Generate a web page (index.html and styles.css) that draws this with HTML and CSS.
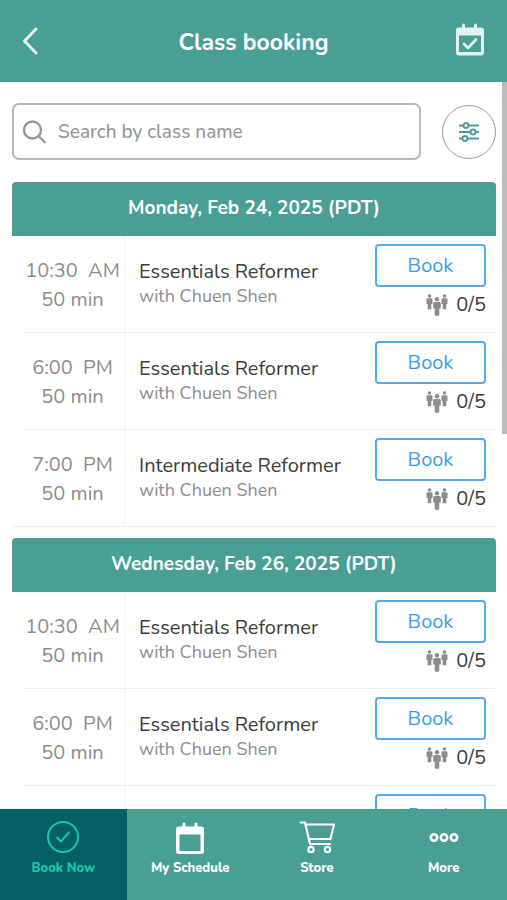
FILE: index.html
```html
<!DOCTYPE html>
<html lang="en">
<head>
<meta charset="utf-8">
<meta name="viewport" content="width=device-width, initial-scale=1">
<title>Class booking</title>
<link rel="stylesheet" href="styles.css">
</head>
<body>
<svg class="sprite" aria-hidden="true">
  <symbol id="people" viewBox="0 0 22 22">
    <g id="person">
      <circle cx="3.500" cy="2" r="1.800"/>
      <path d="M1.700 4.200h3.600q1.200 0 1.200 1.200v4.600H5.300v5.200H1.700V10H.5V5.400q0-1.200 1.200-1.200z"/>
    </g>
    <use href="#person" x="15"/>
    <circle cx="11" cy="5.200" r="2.200"/>
    <path d="M8.800 8h4.400q1.600 0 1.600 1.600v5h-1.500v6q0 1.200-1.100 1.200H9.800q-1.100 0-1.100-1.200v-6H7.200v-5Q7.200 8 8.800 8z"/>
  </symbol>
</svg>

<header class="topbar">
  <button class="icon-button" type="button" aria-label="Back">
    <svg width="18" height="28" viewBox="0 0 18 28"><path d="M16 2 4.500 14 16 26" fill="none" stroke="currentColor" stroke-width="3" stroke-linecap="round" stroke-linejoin="round"/></svg>
  </button>
  <h1>Class booking</h1>
  <button class="icon-button" type="button" aria-label="My bookings">
    <svg width="30" height="36" viewBox="0 0 30 36"><path fill="currentColor" fill-rule="evenodd" d="M7 2q0-1.500 1.500-1.500T10 2v2.500h9V2q0-1.500 1.500-1.500T22 2v2.500h4q3 0 3 3V29.500q0 3-3 3H4q-3 0-3-3V7.500q0-3 3-3h3zM4 12.500V29h22V12.500z"/><path d="m9 21 4 4 8-8.500" fill="none" stroke="currentColor" stroke-width="2.600" stroke-linecap="round" stroke-linejoin="round"/></svg>
  </button>
</header>

<main class="content">
  <form class="search">
    <label class="search-box">
      <svg width="24" height="24" viewBox="0 0 24 24" fill="none" stroke="currentColor" stroke-width="2.400"><circle cx="9.500" cy="10" r="8.500"/><path d="m16 16.500 6.500 6.500"/></svg>
      <input type="search" placeholder="Search by class name" aria-label="Search by class name">
    </label>
    <button class="filter" type="button" aria-label="Filter">
      <svg width="22" height="20" viewBox="0 0 22 20" fill="none" stroke="currentColor" stroke-width="1.900"><path d="M1 3.500h4.500m5 0H21M1 10h11.500m5 0H21M1 16.500h3.500m5 0H21"/><circle cx="8" cy="3.500" r="2.500"/><circle cx="15" cy="10" r="2.500"/><circle cx="7" cy="16.500" r="2.500"/></svg>
    </button>
  </form>

  <section class="day">
    <h2>Monday, Feb 24, 2025 (PDT)</h2>
    <ul>
      <li class="session">
        <div class="when"><span>10:30&nbsp; AM</span><span>50 min</span></div>
        <div class="what"><h3>Essentials Reformer</h3><p>with Chuen Shen</p></div>
        <div class="action"><button class="book" type="button">Book</button><p class="spots"><svg width="22" height="22"><use href="#people"/></svg>0/5</p></div>
      </li>
      <li class="session">
        <div class="when"><span>6:00&nbsp; PM</span><span>50 min</span></div>
        <div class="what"><h3>Essentials Reformer</h3><p>with Chuen Shen</p></div>
        <div class="action"><button class="book" type="button">Book</button><p class="spots"><svg width="22" height="22"><use href="#people"/></svg>0/5</p></div>
      </li>
      <li class="session">
        <div class="when"><span>7:00&nbsp; PM</span><span>50 min</span></div>
        <div class="what"><h3>Intermediate Reformer</h3><p>with Chuen Shen</p></div>
        <div class="action"><button class="book" type="button">Book</button><p class="spots"><svg width="22" height="22"><use href="#people"/></svg>0/5</p></div>
      </li>
    </ul>
  </section>

  <section class="day">
    <h2>Wednesday, Feb 26, 2025 (PDT)</h2>
    <ul>
      <li class="session">
        <div class="when"><span>10:30&nbsp; AM</span><span>50 min</span></div>
        <div class="what"><h3>Essentials Reformer</h3><p>with Chuen Shen</p></div>
        <div class="action"><button class="book" type="button">Book</button><p class="spots"><svg width="22" height="22"><use href="#people"/></svg>0/5</p></div>
      </li>
      <li class="session">
        <div class="when"><span>6:00&nbsp; PM</span><span>50 min</span></div>
        <div class="what"><h3>Essentials Reformer</h3><p>with Chuen Shen</p></div>
        <div class="action"><button class="book" type="button">Book</button><p class="spots"><svg width="22" height="22"><use href="#people"/></svg>0/5</p></div>
      </li>
      <li class="session">
        <div class="when"></div>
        <div class="what"></div>
        <div class="action"><button class="book" type="button">Book</button></div>
      </li>
    </ul>
  </section>
  <div class="scroll-thumb"></div>
</main>

<nav class="tabs">
  <a class="tab active" href="#book" aria-current="page">
    <svg width="34" height="34" viewBox="0 0 34 34" fill="none" stroke="currentColor" stroke-width="2" stroke-linecap="round" stroke-linejoin="round"><circle cx="17" cy="17" r="15"/><path d="m11 17.500 4 4 8-9"/></svg>
    Book Now
  </a>
  <a class="tab" href="#schedule">
    <svg width="30" height="34" viewBox="0 0 30 34"><path fill="currentColor" fill-rule="evenodd" d="M7.500 4q0-1.500 1.500-1.500T10.500 4v2.500h9V4q0-1.500 1.500-1.500T22.500 4v2.500H26q3 0 3 3V31q0 3-3 3H4q-3 0-3-3V9.500q0-3 3-3h3.500zM4.500 14.500V31h21V14.500z"/></svg>
    My Schedule
  </a>
  <a class="tab" href="#store">
    <svg width="36" height="34" viewBox="0 0 36 34" fill="none" stroke="currentColor" stroke-width="2.200" stroke-linecap="round" stroke-linejoin="round"><path d="M1.500 2.500H6l5 21.500H31M7 4.500h28L31.500 19H10"/><circle cx="12" cy="29.500" r="2.700"/><circle cx="28.500" cy="29.500" r="2.700"/></svg>
    Store
  </a>
  <a class="tab" href="#more">
    <svg width="30" height="34" viewBox="0 0 30 34" fill="none" stroke="currentColor" stroke-width="2.600"><circle cx="5" cy="17.500" r="3.200"/><circle cx="15" cy="17.500" r="3.200"/><circle cx="25" cy="17.500" r="3.200"/></svg>
    More
  </a>
</nav>
</body>
</html>
```
FILE: styles.css
```css
* { box-sizing: border-box; }

body {
  margin: 0;
  height: 100vh;
  display: flex;
  flex-direction: column;
  background: #fff;
  color: #3c3c3c;
  font-family: Nunito, Lato, sans-serif;
  font-size: 20px;
}

h1, h2, h3, p, ul { margin: 0; padding: 0; }
ul { list-style: none; }
button, input { font: inherit; }
button { cursor: pointer; }
svg { flex: none; }

.sprite {
  position: absolute;
  width: 0;
  height: 0;
}

.topbar {
  flex: none;
  display: flex;
  align-items: center;
  justify-content: space-between;
  height: 82px;
  padding: 0 20px;
  background: #4a9f95;
  color: #fff;
}

.topbar h1 {
  padding-top: 3px;
  font-size: 23px;
  line-height: 28px;
  font-weight: 700;
}

.icon-button {
  display: flex;
  width: 32px;
  padding: 0;
  border: 0;
  background: none;
  color: #e0f3f1;
}

.content {
  position: relative;
  flex: 1;
  min-height: 0;
  overflow: hidden;
  padding: 21px 11px 0 12px;
}

.search {
  display: flex;
  align-items: center;
  gap: 21px;
  margin-bottom: 22px;
}

.search-box {
  flex: 1;
  display: flex;
  align-items: center;
  gap: 11px;
  height: 57px;
  padding: 0 9px;
  border: 2px solid #b3b8b8;
  border-radius: 7px;
  color: #929999;
}

.search-box input {
  flex: 1;
  min-width: 0;
  padding: 0;
  border: 0;
  outline: 0;
  background: none;
  color: #3c3c3c;
  font-size: 19px;
  font-weight: 500;
}

.search-box input::placeholder { color: #929999; }

.filter {
  display: flex;
  align-items: center;
  justify-content: center;
  width: 54px;
  height: 54px;
  padding: 0;
  border: 1px solid #999f9f;
  border-radius: 50%;
  background: #fff;
  color: #4a9f95;
}

.day { margin-bottom: 11px; }

.day h2 {
  padding: 13px 12px 14px;
  border-radius: 4px 4px 0 0;
  background: #4a9f95;
  color: #fff;
  font-size: 19px;
  line-height: 27px;
  font-weight: 700;
  text-align: center;
}

.session {
  display: flex;
  height: 97px;
  margin-left: 12px;
  border-bottom: 1px solid #e9eeee;
}

.session:last-child {
  margin-left: 0;
  padding-left: 12px;
}

.when {
  flex: none;
  display: flex;
  flex-direction: column;
  justify-content: center;
  width: 101px;
  padding: 2px 3px 0 0;
  border-right: 1px solid #eff3f3;
  color: #8c8c8c;
  line-height: 29px;
  text-align: center;
}

.what {
  flex: 1;
  display: flex;
  flex-direction: column;
  justify-content: center;
  padding-left: 14px;
  line-height: 25px;
}

.what h3 {
  font-size: 20px;
  font-weight: 400;
}

.what p {
  color: #8c8c8c;
  font-size: 18px;
}

.action {
  flex: none;
  width: 121px;
  padding: 8px 10px 0 0;
}

.book {
  width: 100%;
  height: 43px;
  border: 2px solid #55aae8;
  border-radius: 4px;
  background: #fff;
  color: #3d9de4;
}

.spots {
  display: flex;
  align-items: center;
  justify-content: flex-end;
  gap: 8px;
  padding-top: 5px;
  line-height: 26px;
}

.spots svg { fill: #8c8c8c; }

.scroll-thumb {
  position: absolute;
  top: 0;
  right: 0;
  width: 5px;
  height: 352px;
  background: #bcbcbc;
}

.tabs {
  flex: none;
  display: grid;
  grid-template-columns: repeat(4, 1fr);
  height: 91px;
  background: #4a9f95;
}

.tab {
  display: flex;
  flex-direction: column;
  align-items: center;
  gap: 5px;
  padding-top: 11px;
  color: #fff;
  font-size: 13px;
  line-height: 18px;
  font-weight: 800;
  text-decoration: none;
}

.tab.active {
  background: #056065;
  color: #17c9ac;
}
```
